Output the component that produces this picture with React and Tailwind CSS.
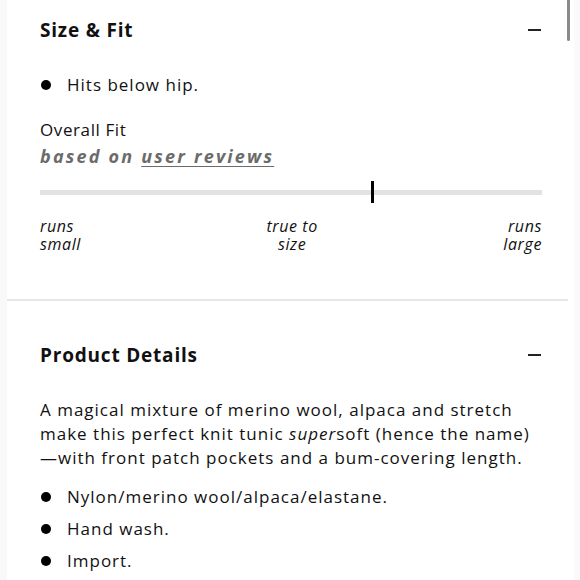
// App.jsx
function Bullet({ children }) {
  return (
    <li className="flex items-center">
      <span className="w-[10px] h-[10px] rounded-full bg-black ml-[1px] mr-[16px] shrink-0"></span>
      <span>{children}</span>
    </li>
  );
}

function Minus() {
  return <span className="block w-[13px] h-[2px] bg-[#222] mr-[1px]"></span>;
}

export default function App() {
  return (
    <div className="w-[580px] h-[580px] overflow-hidden bg-white flex text-[#111] font-['Open_Sans','Liberation_Sans',sans-serif]">
      <div className="w-[7px] bg-[#f9f9f9] shrink-0"></div>
      <div className="flex-1 relative">
        <div className="absolute right-[4px] top-0 w-[3px] h-[41px] bg-[#8a8a8a] rounded-b"></div>

        <section className="pl-[33px] pr-[32px] pt-[16px] pb-[46px]">
          <div className="flex items-center justify-between h-[28px]">
            <h2 className="text-[19px] font-bold tracking-[0.8px]">Size &amp; Fit</h2>
            <Minus />
          </div>
          <ul className="mt-[29px] text-[17px] leading-[24px] tracking-[1px]">
            <Bullet>Hits below hip.</Bullet>
          </ul>
          <div className="mt-[20px] text-[17px] leading-[26px] tracking-[0.6px]">Overall Fit</div>
          <div className="text-[18px] leading-[26px] italic font-bold text-[#6b6b6b] tracking-[2.2px]">
            based on <span className="underline underline-offset-[3px]">user reviews</span>
          </div>
          <div className="relative mt-[12px] h-[22px] flex items-center">
            <div className="w-full h-[5px] bg-[#e2e2e2]"></div>
            <div className="absolute left-[331px] top-0 w-[3px] h-[22px] bg-black"></div>
          </div>
          <div className="mt-[14px] flex justify-between text-[16px] leading-[18px] italic tracking-[0.6px]">
            <div className="text-left">runs<br />small</div>
            <div className="text-center">true to<br />size</div>
            <div className="text-right">runs<br />large</div>
          </div>
        </section>

        <div className="h-[2px] bg-[#e6e6e6] mr-[6px]"></div>

        <section className="pl-[33px] pr-[32px] pt-[40px]">
          <div className="flex items-center justify-between h-[28px]">
            <h2 className="text-[19px] font-bold tracking-[0.8px]">Product Details</h2>
            <Minus />
          </div>
          <p className="mt-[29px] text-[17px] leading-[24px] tracking-[1px]">
            A magical mixture of merino wool, alpaca and stretch make this perfect knit tunic <i>super</i>soft (hence the name)—with front patch pockets and a bum-covering length.
          </p>
          <ul className="mt-[15px] text-[17px] leading-[24px] tracking-[1px] flex flex-col gap-[8px]">
            <Bullet>Nylon/merino wool/alpaca/elastane.</Bullet>
            <Bullet>Hand wash.</Bullet>
            <Bullet>Import.</Bullet>
          </ul>
        </section>
      </div>
      <div className="w-[6px] bg-[#fafafa] shrink-0"></div>
    </div>
  );
}
